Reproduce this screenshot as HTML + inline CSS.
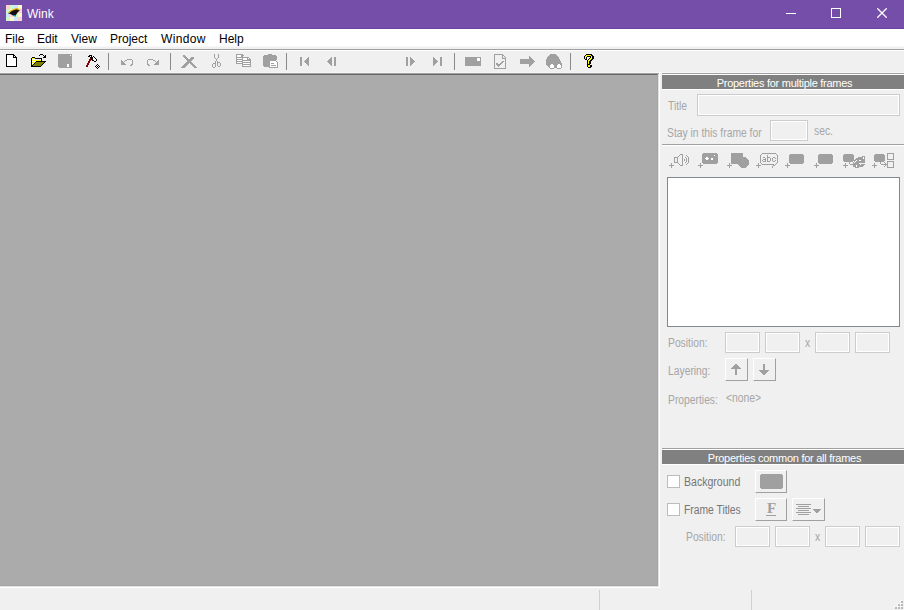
<!DOCTYPE html>
<html><head><meta charset="utf-8">
<style>
*{margin:0;padding:0;box-sizing:border-box}
html,body{width:904px;height:610px;overflow:hidden;background:#f0f0f0;font-family:"Liberation Sans",sans-serif;position:relative}
.a{position:absolute;white-space:nowrap}
.mi{font-size:12px;color:#000;line-height:14px}
.hdr{left:662px;width:242px;height:14px;background:#808080;color:#fff;font-size:11px;text-align:center;line-height:14px;letter-spacing:-0.27px;padding:1px 0 0 3px}
.lbl{font-size:12px;color:#a6a6a6;line-height:14px;transform:scaleX(0.86);transform-origin:0 0}
.box{border:1px solid #cccccc;background:#f0f0f0}
.box:after{content:"";position:absolute;left:0;top:0;right:0;bottom:0;border:1px solid #fff}
.btn{border-left:1px solid #fff;border-top:1px solid #fff;border-right:1px solid #a0a0a0;border-bottom:1px solid #a0a0a0;background:#f0f0f0}
.chk{width:13px;height:13px;background:#fff;border:1px solid #bcbcbc}
#ov{position:absolute;left:0;top:0}
</style></head><body>
<!-- title bar -->
<div class="a" style="left:0;top:0;width:904px;height:28px;background:#744ea8"></div>
<div class="a" style="left:0;top:28px;width:904px;height:1px;background:#6b44a3"></div>
<svg class="a" style="left:6px;top:5px" width="16" height="16" viewBox="0 0 16 16" shape-rendering="crispEdges"><rect x="0" y="0" width="4" height="4" fill="#ffd2d2"/><rect x="4" y="0" width="4" height="4" fill="#ccf6cc"/><rect x="8" y="0" width="4" height="4" fill="#cce6ff"/><rect x="12" y="0" width="4" height="4" fill="#fffbc8"/><rect x="0" y="4" width="4" height="4" fill="#ccf6cc"/><rect x="4" y="4" width="4" height="4" fill="#fffbc8"/><rect x="8" y="4" width="4" height="4" fill="#cce6ff"/><rect x="12" y="4" width="4" height="4" fill="#ffd2d2"/><rect x="0" y="8" width="4" height="4" fill="#cce6ff"/><rect x="4" y="8" width="4" height="4" fill="#ffd2d2"/><rect x="8" y="8" width="4" height="4" fill="#ccf6cc"/><rect x="12" y="8" width="4" height="4" fill="#fffbc8"/><rect x="0" y="12" width="4" height="4" fill="#ccf6cc"/><rect x="4" y="12" width="4" height="4" fill="#fffbc8"/><rect x="8" y="12" width="4" height="4" fill="#cce6ff"/><rect x="12" y="12" width="4" height="4" fill="#ffd2d2"/></svg>
<svg class="a" style="left:6px;top:5px" width="16" height="16" viewBox="0 0 16 16">
  <path d="M2.2 8.6 C3.5 6.5 6 5 8.5 4.3 L10.5 3.7 L13 4.6 L13.6 5.6 L11.8 7.2 L10.2 9.4 L9.3 11.4 L7 10.4 L5 9.2 Z" fill="#111"/>
  <path d="M2.8 7.8 C4 6 6.5 4.7 9 4.1 L11 3.7 L13 4.7" fill="none" stroke="#f0b400" stroke-width="1.3"/>
  <path d="M6.3 9.9 L9.3 11.5 L9.7 10.1 Z" fill="#2f8fd8"/>
</svg>
<div class="a" style="left:27px;top:7px;color:#fff;font-size:12px;line-height:14px">Wink</div>
<div class="a" style="left:786px;top:13px;width:10px;height:1px;background:#fff"></div>
<div class="a" style="left:831px;top:8px;width:10px;height:10px;border:1px solid #fff"></div>
<svg class="a" style="left:877px;top:8px" width="10" height="10"><path d="M0.3 0.3L9.7 9.7M9.7 0.3L0.3 9.7" stroke="#fff" stroke-width="1.3"/></svg>

<!-- menu bar -->
<div class="a" style="left:0;top:29px;width:904px;height:17px;background:#fff"></div>
<div class="a" style="left:0;top:46px;width:904px;height:1px;background:#f7f7f7"></div>
<div class="a" style="left:0;top:47px;width:904px;height:2px;background:#f0f0f0"></div>
<div class="a" style="left:0;top:49px;width:904px;height:1px;background:#a0a0a0"></div>
<div class="a" style="left:0;top:50px;width:904px;height:1px;background:#fff"></div>
<div class="a mi" style="left:5px;top:32px">File</div>
<div class="a mi" style="left:37px;top:32px">Edit</div>
<div class="a mi" style="left:71px;top:32px">View</div>
<div class="a mi" style="left:110px;top:32px">Project</div>
<div class="a mi" style="left:161px;top:32px;letter-spacing:0.35px">Window</div>
<div class="a mi" style="left:219px;top:32px">Help</div>

<!-- toolbar separators -->
<div class="a" style="left:108px;top:53px;width:1px;height:17px;background:#8a8a8a"></div>
<div class="a" style="left:170px;top:53px;width:1px;height:17px;background:#8a8a8a"></div>
<div class="a" style="left:286px;top:53px;width:1px;height:17px;background:#8a8a8a"></div>
<div class="a" style="left:454px;top:53px;width:1px;height:17px;background:#8a8a8a"></div>
<div class="a" style="left:570px;top:53px;width:1px;height:17px;background:#8a8a8a"></div>
<div class="a" style="left:0;top:72px;width:904px;height:1px;background:#f8f8f8"></div>

<!-- workspace -->
<div class="a" style="left:0;top:73px;width:659px;height:1px;background:#a0a0a0"></div>
<div class="a" style="left:0;top:74px;width:658px;height:512px;background:#ababab;border-top:1px solid #696969;border-right:1px solid #a4a4a4;border-bottom:1px solid #a4a4a4"></div>
<div class="a" style="left:658px;top:74px;width:1px;height:513px;background:#e3e3e3"></div>
<div class="a" style="left:0;top:586px;width:659px;height:1px;background:#e3e3e3"></div>
<div class="a" style="left:659px;top:73px;width:1px;height:515px;background:#fff"></div>
<div class="a" style="left:0;top:587px;width:660px;height:1px;background:#fff"></div>

<!-- right panel -->
<div class="a" style="left:662px;top:73px;width:242px;height:1px;background:#a0a0a0"></div>
<div class="a" style="left:662px;top:74px;width:242px;height:1px;background:#fff"></div>
<div class="a hdr" style="top:75px">Properties for multiple frames</div>
<div class="a" style="left:662px;top:89px;width:242px;height:1px;background:#fff"></div>

<div class="a lbl" style="left:668px;top:99px">Title</div>
<div class="a box" style="left:697px;top:94px;width:203px;height:22px"></div>
<div class="a lbl" style="left:667px;top:126px">Stay in this frame for</div>
<div class="a box" style="left:770px;top:120px;width:38px;height:21px"></div>
<div class="a lbl" style="left:814px;top:124px">sec.</div>
<div class="a" style="left:662px;top:144px;width:242px;height:1px;background:#a0a0a0"></div>
<div class="a" style="left:662px;top:145px;width:242px;height:1px;background:#fff"></div>

<div class="a" style="left:667px;top:177px;width:233px;height:150px;background:#fff;border:1px solid #828790"></div>

<div class="a lbl" style="left:668px;top:336px">Position:</div>
<div class="a box" style="left:725px;top:332px;width:35px;height:21px"></div>
<div class="a box" style="left:765px;top:332px;width:35px;height:21px"></div>
<div class="a lbl" style="left:805px;top:336px">x</div>
<div class="a box" style="left:815px;top:332px;width:35px;height:21px"></div>
<div class="a box" style="left:855px;top:332px;width:35px;height:21px"></div>
<div class="a lbl" style="left:668px;top:364px">Layering:</div>
<div class="a btn" style="left:725px;top:358px;width:23px;height:23px"></div>
<div class="a btn" style="left:753px;top:358px;width:23px;height:23px"></div>
<div class="a lbl" style="left:668px;top:393px">Properties:</div>
<div class="a lbl" style="left:726px;top:391px">&lt;none&gt;</div>

<div class="a" style="left:662px;top:448px;width:242px;height:1px;background:#a0a0a0"></div>
<div class="a" style="left:662px;top:449px;width:242px;height:1px;background:#fff"></div>
<div class="a hdr" style="top:450px">Properties common for all frames</div>
<div class="a" style="left:662px;top:464px;width:242px;height:1px;background:#fff"></div>

<div class="a chk" style="left:667px;top:475px"></div>
<div class="a lbl" style="left:684px;top:475px;color:#767676;transform:scaleX(0.88)">Background</div>
<div class="a btn" style="left:755px;top:470px;width:32px;height:23px"></div>
<div class="a chk" style="left:667px;top:503px"></div>
<div class="a lbl" style="left:684px;top:503px;color:#767676;transform:scaleX(0.86)">Frame Titles</div>
<div class="a btn" style="left:755px;top:498px;width:32px;height:23px"></div>
<div class="a" style="left:767px;top:501px;font-family:'Liberation Serif',serif;font-weight:bold;font-size:15px;color:#a0a0a0;line-height:15px">F</div>
<div class="a btn" style="left:792px;top:498px;width:33px;height:23px"></div>
<div class="a lbl" style="left:686px;top:530px">Position:</div>
<div class="a box" style="left:735px;top:526px;width:35px;height:21px"></div>
<div class="a box" style="left:775px;top:526px;width:35px;height:21px"></div>
<div class="a lbl" style="left:815px;top:530px">x</div>
<div class="a box" style="left:825px;top:526px;width:35px;height:21px"></div>
<div class="a box" style="left:865px;top:526px;width:35px;height:21px"></div>

<!-- status bar -->
<div class="a" style="left:599px;top:590px;width:1px;height:20px;background:#d0d0d0"></div>
<div class="a" style="left:751px;top:590px;width:1px;height:20px;background:#d0d0d0"></div>

<svg id="ov" width="904" height="610" shape-rendering="crispEdges"><rect x="6" y="54" width="8" height="1" fill="#000000"/><rect x="6" y="55" width="1" height="1" fill="#000000"/><rect x="7" y="55" width="6" height="1" fill="#ffffff"/><rect x="13" y="55" width="2" height="1" fill="#000000"/><rect x="6" y="56" width="1" height="1" fill="#000000"/><rect x="7" y="56" width="6" height="1" fill="#ffffff"/><rect x="13" y="56" width="1" height="1" fill="#000000"/><rect x="14" y="56" width="1" height="1" fill="#ffffff"/><rect x="15" y="56" width="1" height="1" fill="#000000"/><rect x="6" y="57" width="1" height="1" fill="#000000"/><rect x="7" y="57" width="6" height="1" fill="#ffffff"/><rect x="13" y="57" width="4" height="1" fill="#000000"/><rect x="6" y="58" width="1" height="1" fill="#000000"/><rect x="7" y="58" width="9" height="1" fill="#ffffff"/><rect x="16" y="58" width="1" height="1" fill="#000000"/><rect x="6" y="59" width="1" height="1" fill="#000000"/><rect x="7" y="59" width="9" height="1" fill="#ffffff"/><rect x="16" y="59" width="1" height="1" fill="#000000"/><rect x="6" y="60" width="1" height="1" fill="#000000"/><rect x="7" y="60" width="9" height="1" fill="#ffffff"/><rect x="16" y="60" width="1" height="1" fill="#000000"/><rect x="6" y="61" width="1" height="1" fill="#000000"/><rect x="7" y="61" width="9" height="1" fill="#ffffff"/><rect x="16" y="61" width="1" height="1" fill="#000000"/><rect x="6" y="62" width="1" height="1" fill="#000000"/><rect x="7" y="62" width="9" height="1" fill="#ffffff"/><rect x="16" y="62" width="1" height="1" fill="#000000"/><rect x="6" y="63" width="1" height="1" fill="#000000"/><rect x="7" y="63" width="9" height="1" fill="#ffffff"/><rect x="16" y="63" width="1" height="1" fill="#000000"/><rect x="6" y="64" width="1" height="1" fill="#000000"/><rect x="7" y="64" width="9" height="1" fill="#ffffff"/><rect x="16" y="64" width="1" height="1" fill="#000000"/><rect x="6" y="65" width="1" height="1" fill="#000000"/><rect x="7" y="65" width="9" height="1" fill="#ffffff"/><rect x="16" y="65" width="1" height="1" fill="#000000"/><rect x="6" y="66" width="11" height="1" fill="#000000"/><rect x="40" y="54" width="3" height="1" fill="#000000"/><rect x="39" y="55" width="1" height="1" fill="#000000"/><rect x="43" y="55" width="1" height="1" fill="#000000"/><rect x="45" y="55" width="1" height="1" fill="#000000"/><rect x="44" y="56" width="2" height="1" fill="#000000"/><rect x="32" y="57" width="3" height="1" fill="#000000"/><rect x="43" y="57" width="3" height="1" fill="#000000"/><rect x="31" y="58" width="1" height="1" fill="#000000"/><rect x="32" y="58" width="1" height="1" fill="#ffff00"/><rect x="33" y="58" width="1" height="1" fill="#ffffff"/><rect x="34" y="58" width="1" height="1" fill="#ffff00"/><rect x="35" y="58" width="7" height="1" fill="#000000"/><rect x="31" y="59" width="1" height="1" fill="#000000"/><rect x="32" y="59" width="1" height="1" fill="#ffffff"/><rect x="33" y="59" width="1" height="1" fill="#ffff00"/><rect x="34" y="59" width="1" height="1" fill="#ffffff"/><rect x="35" y="59" width="1" height="1" fill="#ffff00"/><rect x="36" y="59" width="1" height="1" fill="#ffffff"/><rect x="37" y="59" width="1" height="1" fill="#ffff00"/><rect x="38" y="59" width="1" height="1" fill="#ffffff"/><rect x="39" y="59" width="1" height="1" fill="#ffff00"/><rect x="40" y="59" width="1" height="1" fill="#ffffff"/><rect x="41" y="59" width="1" height="1" fill="#000000"/><rect x="31" y="60" width="1" height="1" fill="#000000"/><rect x="32" y="60" width="1" height="1" fill="#ffff00"/><rect x="33" y="60" width="1" height="1" fill="#ffffff"/><rect x="34" y="60" width="1" height="1" fill="#ffff00"/><rect x="35" y="60" width="1" height="1" fill="#ffffff"/><rect x="36" y="60" width="1" height="1" fill="#ffff00"/><rect x="37" y="60" width="1" height="1" fill="#ffffff"/><rect x="38" y="60" width="1" height="1" fill="#ffff00"/><rect x="39" y="60" width="1" height="1" fill="#ffffff"/><rect x="40" y="60" width="1" height="1" fill="#ffff00"/><rect x="41" y="60" width="1" height="1" fill="#000000"/><rect x="31" y="61" width="1" height="1" fill="#000000"/><rect x="32" y="61" width="1" height="1" fill="#ffffff"/><rect x="33" y="61" width="1" height="1" fill="#ffff00"/><rect x="34" y="61" width="1" height="1" fill="#ffffff"/><rect x="35" y="61" width="1" height="1" fill="#ffff00"/><rect x="36" y="61" width="10" height="1" fill="#000000"/><rect x="31" y="62" width="1" height="1" fill="#000000"/><rect x="32" y="62" width="1" height="1" fill="#ffff00"/><rect x="33" y="62" width="1" height="1" fill="#ffffff"/><rect x="34" y="62" width="1" height="1" fill="#ffff00"/><rect x="35" y="62" width="1" height="1" fill="#000000"/><rect x="36" y="62" width="8" height="1" fill="#808000"/><rect x="44" y="62" width="1" height="1" fill="#000000"/><rect x="31" y="63" width="1" height="1" fill="#000000"/><rect x="32" y="63" width="1" height="1" fill="#ffffff"/><rect x="33" y="63" width="1" height="1" fill="#ffff00"/><rect x="34" y="63" width="1" height="1" fill="#000000"/><rect x="35" y="63" width="8" height="1" fill="#808000"/><rect x="43" y="63" width="1" height="1" fill="#000000"/><rect x="31" y="64" width="1" height="1" fill="#000000"/><rect x="32" y="64" width="1" height="1" fill="#ffff00"/><rect x="33" y="64" width="1" height="1" fill="#000000"/><rect x="34" y="64" width="8" height="1" fill="#808000"/><rect x="42" y="64" width="1" height="1" fill="#000000"/><rect x="31" y="65" width="2" height="1" fill="#000000"/><rect x="33" y="65" width="8" height="1" fill="#808000"/><rect x="41" y="65" width="1" height="1" fill="#000000"/><rect x="31" y="66" width="10" height="1" fill="#000000"/><rect x="58" y="54" width="14" height="14" fill="#a0a0a0"/><rect x="70" y="55" width="1" height="1" fill="#ffffff"/><rect x="67" y="64" width="2" height="3" fill="#ffffff"/><rect x="58" y="67" width="1" height="1" fill="#f8f8f8"/><rect x="89" y="55" width="3" height="1" fill="#000000"/><rect x="88" y="56" width="2" height="1" fill="#000000"/><rect x="90" y="56" width="1" height="1" fill="#ffffff"/><rect x="91" y="56" width="1" height="1" fill="#000000"/><rect x="92" y="56" width="1" height="1" fill="#ffffff"/><rect x="93" y="56" width="1" height="1" fill="#000000"/><rect x="90" y="57" width="3" height="1" fill="#000000"/><rect x="93" y="57" width="1" height="1" fill="#ffffff"/><rect x="94" y="57" width="1" height="1" fill="#000000"/><rect x="90" y="58" width="1" height="1" fill="#800000"/><rect x="91" y="58" width="2" height="1" fill="#000000"/><rect x="93" y="58" width="2" height="1" fill="#ffffff"/><rect x="95" y="58" width="1" height="1" fill="#000000"/><rect x="89" y="59" width="2" height="1" fill="#800000"/><rect x="91" y="59" width="2" height="1" fill="#000000"/><rect x="93" y="59" width="3" height="1" fill="#ffffff"/><rect x="96" y="59" width="1" height="1" fill="#000000"/><rect x="89" y="60" width="2" height="1" fill="#800000"/><rect x="92" y="60" width="2" height="1" fill="#000000"/><rect x="94" y="60" width="2" height="1" fill="#ffffff"/><rect x="96" y="60" width="1" height="1" fill="#000000"/><rect x="88" y="61" width="2" height="1" fill="#800000"/><rect x="94" y="61" width="2" height="1" fill="#000000"/><rect x="88" y="62" width="2" height="1" fill="#800000"/><rect x="87" y="63" width="2" height="1" fill="#800000"/><rect x="87" y="64" width="2" height="1" fill="#800000"/><rect x="97" y="64" width="1" height="1" fill="#000000"/><rect x="86" y="65" width="2" height="1" fill="#800000"/><rect x="96" y="65" width="1" height="1" fill="#000000"/><rect x="97" y="65" width="1" height="1" fill="#ffffff"/><rect x="98" y="65" width="1" height="1" fill="#000000"/><rect x="86" y="66" width="2" height="1" fill="#800000"/><rect x="95" y="66" width="1" height="1" fill="#000000"/><rect x="96" y="66" width="1" height="1" fill="#ffffff"/><rect x="97" y="66" width="1" height="1" fill="#000000"/><rect x="98" y="66" width="1" height="1" fill="#ffffff"/><rect x="99" y="66" width="1" height="1" fill="#000000"/><rect x="96" y="67" width="1" height="1" fill="#000000"/><rect x="97" y="67" width="1" height="1" fill="#ffffff"/><rect x="98" y="67" width="1" height="1" fill="#000000"/><rect x="97" y="68" width="1" height="1" fill="#000000"/><rect x="121" y="60" width="1" height="1" fill="#a0a0a0"/><rect x="121" y="61" width="2" height="1" fill="#a0a0a0"/><rect x="121" y="62" width="3" height="1" fill="#a0a0a0"/><rect x="121" y="63" width="4" height="1" fill="#a0a0a0"/><rect x="121" y="64" width="5" height="1" fill="#a0a0a0"/><rect x="124" y="61" width="1" height="1" fill="#a0a0a0"/><rect x="125" y="60" width="2" height="1" fill="#a0a0a0"/><rect x="127" y="59" width="5" height="1" fill="#a0a0a0"/><rect x="132" y="60" width="1" height="5" fill="#a0a0a0"/><rect x="131" y="64" width="1" height="1" fill="#a0a0a0"/><rect x="130" y="65" width="2" height="1" fill="#a0a0a0"/><rect x="158" y="60" width="1" height="1" fill="#a0a0a0"/><rect x="157" y="61" width="2" height="1" fill="#a0a0a0"/><rect x="156" y="62" width="3" height="1" fill="#a0a0a0"/><rect x="155" y="63" width="4" height="1" fill="#a0a0a0"/><rect x="154" y="64" width="5" height="1" fill="#a0a0a0"/><rect x="155" y="61" width="1" height="1" fill="#a0a0a0"/><rect x="153" y="60" width="2" height="1" fill="#a0a0a0"/><rect x="148" y="59" width="5" height="1" fill="#a0a0a0"/><rect x="147" y="60" width="1" height="5" fill="#a0a0a0"/><rect x="148" y="64" width="1" height="1" fill="#a0a0a0"/><rect x="148" y="65" width="2" height="1" fill="#a0a0a0"/><rect x="183" y="55" width="2" height="1" fill="#a0a0a0"/><rect x="184" y="56" width="2" height="1" fill="#a0a0a0"/><rect x="185" y="57" width="2" height="1" fill="#a0a0a0"/><rect x="186" y="58" width="2" height="1" fill="#a0a0a0"/><rect x="187" y="59" width="2" height="1" fill="#a0a0a0"/><rect x="188" y="60" width="2" height="1" fill="#a0a0a0"/><rect x="189" y="61" width="2" height="1" fill="#a0a0a0"/><rect x="190" y="62" width="2" height="1" fill="#a0a0a0"/><rect x="191" y="63" width="2" height="1" fill="#a0a0a0"/><rect x="192" y="64" width="2" height="1" fill="#a0a0a0"/><rect x="193" y="65" width="2" height="1" fill="#a0a0a0"/><rect x="194" y="66" width="2" height="1" fill="#a0a0a0"/><rect x="195" y="67" width="2" height="1" fill="#a0a0a0"/><rect x="183" y="56" width="1" height="1" fill="#a0a0a0"/><rect x="184" y="57" width="1" height="1" fill="#a0a0a0"/><rect x="185" y="58" width="1" height="1" fill="#a0a0a0"/><rect x="186" y="59" width="1" height="1" fill="#a0a0a0"/><rect x="187" y="60" width="1" height="1" fill="#a0a0a0"/><rect x="188" y="61" width="1" height="1" fill="#a0a0a0"/><rect x="189" y="62" width="1" height="1" fill="#a0a0a0"/><rect x="190" y="63" width="1" height="1" fill="#a0a0a0"/><rect x="191" y="64" width="1" height="1" fill="#a0a0a0"/><rect x="192" y="65" width="1" height="1" fill="#a0a0a0"/><rect x="193" y="66" width="1" height="1" fill="#a0a0a0"/><rect x="194" y="67" width="1" height="1" fill="#a0a0a0"/><rect x="191" y="57" width="3" height="1" fill="#a0a0a0"/><rect x="190" y="58" width="3" height="1" fill="#a0a0a0"/><rect x="189" y="59" width="3" height="1" fill="#a0a0a0"/><rect x="188" y="60" width="3" height="1" fill="#a0a0a0"/><rect x="187" y="61" width="3" height="1" fill="#a0a0a0"/><rect x="186" y="62" width="3" height="1" fill="#a0a0a0"/><rect x="185" y="63" width="3" height="1" fill="#a0a0a0"/><rect x="184" y="64" width="3" height="1" fill="#a0a0a0"/><rect x="183" y="65" width="3" height="1" fill="#a0a0a0"/><rect x="182" y="66" width="3" height="1" fill="#a0a0a0"/><rect x="181" y="67" width="3" height="1" fill="#a0a0a0"/><rect x="191" y="58" width="3" height="1" fill="#a0a0a0"/><rect x="190" y="59" width="3" height="1" fill="#a0a0a0"/><rect x="189" y="60" width="3" height="1" fill="#a0a0a0"/><rect x="188" y="61" width="3" height="1" fill="#a0a0a0"/><rect x="187" y="62" width="3" height="1" fill="#a0a0a0"/><rect x="186" y="63" width="3" height="1" fill="#a0a0a0"/><rect x="185" y="64" width="3" height="1" fill="#a0a0a0"/><rect x="184" y="65" width="3" height="1" fill="#a0a0a0"/><rect x="183" y="66" width="3" height="1" fill="#a0a0a0"/><rect x="182" y="67" width="3" height="1" fill="#a0a0a0"/><rect x="214" y="54" width="1" height="4" fill="#a0a0a0"/><rect x="218" y="54" width="1" height="4" fill="#a0a0a0"/><rect x="215" y="58" width="1" height="1" fill="#a0a0a0"/><rect x="217" y="58" width="1" height="1" fill="#a0a0a0"/><rect x="216" y="59" width="1" height="1" fill="#a0a0a0"/><rect x="216" y="60" width="1" height="1" fill="#a0a0a0"/><rect x="215" y="61" width="1" height="1" fill="#a0a0a0"/><rect x="217" y="61" width="1" height="1" fill="#a0a0a0"/><rect x="215" y="62" width="1" height="5" fill="#a0a0a0"/><rect x="213" y="63" width="2" height="1" fill="#a0a0a0"/><rect x="212" y="64" width="1" height="3" fill="#a0a0a0"/><rect x="213" y="67" width="2" height="1" fill="#a0a0a0"/><rect x="217" y="62" width="1" height="4" fill="#a0a0a0"/><rect x="218" y="62" width="2" height="1" fill="#a0a0a0"/><rect x="220" y="63" width="1" height="3" fill="#a0a0a0"/><rect x="218" y="66" width="2" height="1" fill="#a0a0a0"/><rect x="236" y="54" width="7" height="10" fill="#a0a0a0"/><rect x="237" y="55" width="4" height="2" fill="#ffffff"/><rect x="237" y="58" width="5" height="1" fill="#ffffff"/><rect x="237" y="60" width="5" height="1" fill="#ffffff"/><rect x="237" y="62" width="5" height="1" fill="#ffffff"/><rect x="243" y="55" width="1" height="1" fill="#a0a0a0"/><rect x="242" y="57" width="9" height="10" fill="#a0a0a0"/><rect x="243" y="58" width="4" height="2" fill="#ffffff"/><rect x="243" y="61" width="7" height="1" fill="#ffffff"/><rect x="243" y="63" width="7" height="1" fill="#ffffff"/><rect x="243" y="65" width="7" height="1" fill="#ffffff"/><rect x="249" y="57" width="1" height="1" fill="#f0f0f0"/><rect x="250" y="57" width="1" height="1" fill="#f0f0f0"/><rect x="250" y="58" width="1" height="1" fill="#f0f0f0"/><rect x="248" y="58" width="1" height="1" fill="#ffffff"/><rect x="264" y="55" width="12" height="12" fill="#a0a0a0"/><rect x="263" y="56" width="14" height="10" fill="#a0a0a0"/><rect x="268" y="54" width="4" height="1" fill="#a0a0a0"/><rect x="269" y="60" width="9" height="8" fill="#a0a0a0"/><rect x="270" y="61" width="6" height="6" fill="#ffffff"/><rect x="276" y="63" width="1" height="4" fill="#ffffff"/><rect x="276" y="62" width="1" height="1" fill="#ffffff"/><rect x="277" y="60" width="1" height="1" fill="#f0f0f0"/><rect x="277" y="61" width="1" height="1" fill="#f0f0f0"/><rect x="276" y="60" width="1" height="1" fill="#f0f0f0"/><rect x="271" y="63" width="3" height="1" fill="#a0a0a0"/><rect x="271" y="65" width="5" height="1" fill="#a0a0a0"/><rect x="300" y="57" width="2" height="9" fill="#a0a0a0"/><rect x="304" y="61" width="1" height="1" fill="#a0a0a0"/><rect x="305" y="60" width="1" height="3" fill="#a0a0a0"/><rect x="306" y="59" width="1" height="5" fill="#a0a0a0"/><rect x="307" y="58" width="1" height="7" fill="#a0a0a0"/><rect x="308" y="57" width="1" height="9" fill="#a0a0a0"/><rect x="327" y="61" width="1" height="1" fill="#a0a0a0"/><rect x="328" y="60" width="1" height="3" fill="#a0a0a0"/><rect x="329" y="59" width="1" height="5" fill="#a0a0a0"/><rect x="330" y="58" width="1" height="7" fill="#a0a0a0"/><rect x="331" y="57" width="1" height="9" fill="#a0a0a0"/><rect x="334" y="57" width="2" height="9" fill="#a0a0a0"/><rect x="406" y="57" width="2" height="9" fill="#a0a0a0"/><rect x="414" y="61" width="1" height="1" fill="#a0a0a0"/><rect x="413" y="60" width="1" height="3" fill="#a0a0a0"/><rect x="412" y="59" width="1" height="5" fill="#a0a0a0"/><rect x="411" y="58" width="1" height="7" fill="#a0a0a0"/><rect x="410" y="57" width="1" height="9" fill="#a0a0a0"/><rect x="437" y="61" width="1" height="1" fill="#a0a0a0"/><rect x="436" y="60" width="1" height="3" fill="#a0a0a0"/><rect x="435" y="59" width="1" height="5" fill="#a0a0a0"/><rect x="434" y="58" width="1" height="7" fill="#a0a0a0"/><rect x="433" y="57" width="1" height="9" fill="#a0a0a0"/><rect x="440" y="57" width="2" height="9" fill="#a0a0a0"/><rect x="465" y="57" width="16" height="9" fill="#a0a0a0"/><rect x="477" y="58" width="3" height="3" fill="#ffffff"/><rect x="494" y="54" width="9" height="1" fill="#a0a0a0"/><rect x="494" y="54" width="1" height="15" fill="#a0a0a0"/><rect x="494" y="68" width="12" height="1" fill="#a0a0a0"/><rect x="505" y="58" width="1" height="11" fill="#a0a0a0"/><rect x="502" y="54" width="1" height="5" fill="#a0a0a0"/><rect x="502" y="58" width="4" height="1" fill="#a0a0a0"/><rect x="503" y="55" width="1" height="1" fill="#a0a0a0"/><rect x="504" y="56" width="1" height="1" fill="#a0a0a0"/><rect x="505" y="57" width="1" height="1" fill="#a0a0a0"/><rect x="502" y="61" width="2" height="1" fill="#a0a0a0"/><rect x="501" y="62" width="2" height="1" fill="#a0a0a0"/><rect x="496" y="63" width="2" height="1" fill="#a0a0a0"/><rect x="500" y="63" width="2" height="1" fill="#a0a0a0"/><rect x="496" y="64" width="5" height="1" fill="#a0a0a0"/><rect x="497" y="65" width="3" height="1" fill="#a0a0a0"/><rect x="498" y="66" width="1" height="1" fill="#a0a0a0"/><rect x="520" y="59" width="9" height="5" fill="#a0a0a0"/><rect x="529" y="56" width="1" height="11" fill="#a0a0a0"/><rect x="530" y="57" width="1" height="9" fill="#a0a0a0"/><rect x="531" y="58" width="1" height="7" fill="#a0a0a0"/><rect x="532" y="59" width="1" height="5" fill="#a0a0a0"/><rect x="533" y="60" width="1" height="3" fill="#a0a0a0"/><rect x="534" y="61" width="1" height="1" fill="#a0a0a0"/><rect x="550" y="54" width="6" height="1" fill="#a0a0a0"/><rect x="549" y="55" width="8" height="1" fill="#a0a0a0"/><rect x="548" y="56" width="10" height="1" fill="#a0a0a0"/><rect x="547" y="57" width="12" height="1" fill="#a0a0a0"/><rect x="547" y="58" width="12" height="1" fill="#a0a0a0"/><rect x="546" y="59" width="14" height="1" fill="#a0a0a0"/><rect x="546" y="60" width="14" height="1" fill="#a0a0a0"/><rect x="546" y="61" width="15" height="1" fill="#a0a0a0"/><rect x="546" y="62" width="15" height="1" fill="#a0a0a0"/><rect x="546" y="63" width="16" height="1" fill="#a0a0a0"/><rect x="546" y="64" width="16" height="1" fill="#a0a0a0"/><rect x="547" y="65" width="15" height="1" fill="#a0a0a0"/><rect x="548" y="66" width="14" height="1" fill="#a0a0a0"/><rect x="549" y="67" width="13" height="1" fill="#a0a0a0"/><rect x="550" y="64" width="4" height="4" fill="#ffffff"/><rect x="557" y="64" width="4" height="4" fill="#ffffff"/><rect x="550" y="68" width="4" height="1" fill="#a0a0a0"/><rect x="557" y="68" width="4" height="1" fill="#a0a0a0"/><rect x="550" y="64" width="1" height="1" fill="#a0a0a0"/><rect x="553" y="64" width="1" height="1" fill="#a0a0a0"/><rect x="557" y="64" width="1" height="1" fill="#a0a0a0"/><rect x="560" y="64" width="1" height="1" fill="#a0a0a0"/><rect x="586" y="54" width="6" height="1" fill="#000000"/><rect x="585" y="55" width="1" height="1" fill="#000000"/><rect x="586" y="55" width="5" height="1" fill="#ffff00"/><rect x="591" y="55" width="2" height="1" fill="#000000"/><rect x="584" y="56" width="1" height="1" fill="#000000"/><rect x="585" y="56" width="2" height="1" fill="#ffff00"/><rect x="587" y="56" width="4" height="1" fill="#000000"/><rect x="591" y="56" width="1" height="1" fill="#ffff00"/><rect x="592" y="56" width="2" height="1" fill="#000000"/><rect x="584" y="57" width="1" height="1" fill="#000000"/><rect x="585" y="57" width="1" height="1" fill="#ffff00"/><rect x="586" y="57" width="1" height="1" fill="#000000"/><rect x="588" y="57" width="1" height="1" fill="#ffffff"/><rect x="590" y="57" width="1" height="1" fill="#000000"/><rect x="591" y="57" width="1" height="1" fill="#ffff00"/><rect x="592" y="57" width="2" height="1" fill="#000000"/><rect x="584" y="58" width="1" height="1" fill="#000000"/><rect x="585" y="58" width="1" height="1" fill="#ffff00"/><rect x="586" y="58" width="1" height="1" fill="#000000"/><rect x="587" y="58" width="2" height="1" fill="#ffffff"/><rect x="589" y="58" width="1" height="1" fill="#000000"/><rect x="590" y="58" width="2" height="1" fill="#ffff00"/><rect x="592" y="58" width="2" height="1" fill="#000000"/><rect x="585" y="59" width="2" height="1" fill="#000000"/><rect x="587" y="59" width="1" height="1" fill="#ffffff"/><rect x="588" y="59" width="1" height="1" fill="#000000"/><rect x="589" y="59" width="2" height="1" fill="#ffff00"/><rect x="591" y="59" width="2" height="1" fill="#000000"/><rect x="587" y="60" width="1" height="1" fill="#000000"/><rect x="588" y="60" width="2" height="1" fill="#ffff00"/><rect x="590" y="60" width="2" height="1" fill="#000000"/><rect x="587" y="61" width="1" height="1" fill="#000000"/><rect x="588" y="61" width="1" height="1" fill="#ffff00"/><rect x="589" y="61" width="2" height="1" fill="#000000"/><rect x="587" y="62" width="1" height="1" fill="#000000"/><rect x="588" y="62" width="1" height="1" fill="#ffff00"/><rect x="589" y="62" width="2" height="1" fill="#000000"/><rect x="587" y="63" width="1" height="1" fill="#000000"/><rect x="588" y="63" width="1" height="1" fill="#ffff00"/><rect x="589" y="63" width="2" height="1" fill="#000000"/><rect x="587" y="64" width="3" height="1" fill="#000000"/><rect x="587" y="65" width="1" height="1" fill="#000000"/><rect x="588" y="65" width="2" height="1" fill="#ffff00"/><rect x="590" y="65" width="2" height="1" fill="#000000"/><rect x="587" y="66" width="1" height="1" fill="#000000"/><rect x="588" y="66" width="2" height="1" fill="#ffff00"/><rect x="590" y="66" width="2" height="1" fill="#000000"/><rect x="588" y="67" width="3" height="1" fill="#000000"/><rect x="669" y="165" width="5" height="1" fill="#a0a0a0"/><rect x="671" y="163" width="1" height="5" fill="#a0a0a0"/><rect x="674" y="157" width="4" height="1" fill="#a0a0a0"/><rect x="674" y="162" width="4" height="1" fill="#a0a0a0"/><rect x="674" y="157" width="1" height="6" fill="#a0a0a0"/><rect x="677" y="157" width="1" height="6" fill="#a0a0a0"/><rect x="678" y="156" width="1" height="1" fill="#a0a0a0"/><rect x="679" y="155" width="1" height="1" fill="#a0a0a0"/><rect x="680" y="154" width="3" height="1" fill="#a0a0a0"/><rect x="682" y="154" width="1" height="12" fill="#a0a0a0"/><rect x="680" y="165" width="3" height="1" fill="#a0a0a0"/><rect x="678" y="163" width="1" height="1" fill="#a0a0a0"/><rect x="679" y="164" width="1" height="1" fill="#a0a0a0"/><rect x="684" y="159" width="1" height="2" fill="#a0a0a0"/><rect x="685" y="157" width="1" height="1" fill="#a0a0a0"/><rect x="686" y="158" width="1" height="4" fill="#a0a0a0"/><rect x="685" y="162" width="1" height="1" fill="#a0a0a0"/><rect x="686" y="155" width="1" height="1" fill="#a0a0a0"/><rect x="687" y="156" width="1" height="1" fill="#a0a0a0"/><rect x="688" y="157" width="1" height="6" fill="#a0a0a0"/><rect x="687" y="163" width="1" height="1" fill="#a0a0a0"/><rect x="686" y="164" width="1" height="1" fill="#a0a0a0"/><rect x="698" y="165" width="5" height="1" fill="#a0a0a0"/><rect x="700" y="163" width="1" height="5" fill="#a0a0a0"/><rect x="703" y="153" width="14" height="11" fill="#a0a0a0"/><rect x="702" y="154" width="16" height="9" fill="#a0a0a0"/><rect x="706" y="157" width="2" height="1" fill="#ffffff"/><rect x="705" y="158" width="4" height="1" fill="#ffffff"/><rect x="706" y="159" width="2" height="1" fill="#ffffff"/><rect x="711" y="158" width="2" height="2" fill="#ffffff"/><rect x="714" y="155" width="1" height="1" fill="#ffffff"/><rect x="727" y="165" width="5" height="1" fill="#a0a0a0"/><rect x="729" y="163" width="1" height="5" fill="#a0a0a0"/><rect x="731" y="153" width="12" height="11" fill="#a0a0a0"/><rect x="742" y="157" width="4" height="1" fill="#a0a0a0"/><rect x="742" y="158" width="5" height="1" fill="#a0a0a0"/><rect x="742" y="159" width="6" height="1" fill="#a0a0a0"/><rect x="742" y="160" width="7" height="1" fill="#a0a0a0"/><rect x="742" y="161" width="7" height="1" fill="#a0a0a0"/><rect x="742" y="162" width="7" height="1" fill="#a0a0a0"/><rect x="742" y="163" width="7" height="1" fill="#a0a0a0"/><rect x="738" y="164" width="11" height="1" fill="#a0a0a0"/><rect x="739" y="165" width="9" height="1" fill="#a0a0a0"/><rect x="740" y="166" width="7" height="1" fill="#a0a0a0"/><rect x="741" y="167" width="5" height="1" fill="#a0a0a0"/><rect x="756" y="165" width="5" height="1" fill="#a0a0a0"/><rect x="758" y="163" width="1" height="5" fill="#a0a0a0"/><rect x="762" y="153" width="14" height="1" fill="#a0a0a0"/><rect x="761" y="154" width="1" height="1" fill="#a0a0a0"/><rect x="776" y="154" width="1" height="1" fill="#a0a0a0"/><rect x="760" y="155" width="1" height="8" fill="#a0a0a0"/><rect x="777" y="155" width="1" height="8" fill="#a0a0a0"/><rect x="761" y="163" width="1" height="1" fill="#a0a0a0"/><rect x="776" y="163" width="1" height="1" fill="#a0a0a0"/><rect x="762" y="164" width="12" height="1" fill="#a0a0a0"/><rect x="773" y="165" width="1" height="1" fill="#a0a0a0"/><rect x="772" y="166" width="1" height="2" fill="#a0a0a0"/><rect x="774" y="165" width="1" height="1" fill="#a0a0a0"/><rect x="775" y="164" width="1" height="1" fill="#a0a0a0"/><rect x="767" y="155" width="1" height="1" fill="#a0a0a0"/><rect x="767" y="156" width="1" height="1" fill="#a0a0a0"/><rect x="763" y="157" width="2" height="1" fill="#a0a0a0"/><rect x="767" y="157" width="3" height="1" fill="#a0a0a0"/><rect x="773" y="157" width="2" height="1" fill="#a0a0a0"/><rect x="765" y="158" width="1" height="1" fill="#a0a0a0"/><rect x="767" y="158" width="1" height="1" fill="#a0a0a0"/><rect x="770" y="158" width="1" height="1" fill="#a0a0a0"/><rect x="772" y="158" width="1" height="1" fill="#a0a0a0"/><rect x="775" y="158" width="1" height="1" fill="#a0a0a0"/><rect x="763" y="159" width="3" height="1" fill="#a0a0a0"/><rect x="767" y="159" width="1" height="1" fill="#a0a0a0"/><rect x="770" y="159" width="1" height="1" fill="#a0a0a0"/><rect x="772" y="159" width="1" height="1" fill="#a0a0a0"/><rect x="762" y="160" width="1" height="1" fill="#a0a0a0"/><rect x="765" y="160" width="1" height="1" fill="#a0a0a0"/><rect x="767" y="160" width="1" height="1" fill="#a0a0a0"/><rect x="770" y="160" width="1" height="1" fill="#a0a0a0"/><rect x="772" y="160" width="1" height="1" fill="#a0a0a0"/><rect x="775" y="160" width="1" height="1" fill="#a0a0a0"/><rect x="763" y="161" width="3" height="1" fill="#a0a0a0"/><rect x="767" y="161" width="3" height="1" fill="#a0a0a0"/><rect x="773" y="161" width="2" height="1" fill="#a0a0a0"/><rect x="785" y="165" width="5" height="1" fill="#a0a0a0"/><rect x="787" y="163" width="1" height="5" fill="#a0a0a0"/><rect x="790" y="154" width="13" height="1" fill="#a0a0a0"/><rect x="789" y="155" width="15" height="8" fill="#a0a0a0"/><rect x="790" y="163" width="13" height="1" fill="#a0a0a0"/><rect x="814" y="165" width="5" height="1" fill="#a0a0a0"/><rect x="816" y="163" width="1" height="5" fill="#a0a0a0"/><rect x="819" y="154" width="13" height="1" fill="#a0a0a0"/><rect x="818" y="155" width="15" height="8" fill="#a0a0a0"/><rect x="819" y="163" width="13" height="1" fill="#a0a0a0"/><rect x="843" y="165" width="5" height="1" fill="#a0a0a0"/><rect x="845" y="163" width="1" height="5" fill="#a0a0a0"/><rect x="844" y="154" width="9" height="1" fill="#a0a0a0"/><rect x="843" y="155" width="11" height="6" fill="#a0a0a0"/><rect x="844" y="161" width="9" height="1" fill="#a0a0a0"/><rect x="849" y="162" width="1" height="2" fill="#a0a0a0"/><rect x="850" y="164" width="4" height="1" fill="#a0a0a0"/><rect x="862" y="156" width="3" height="1" fill="#a0a0a0"/><rect x="858" y="157" width="5" height="1" fill="#a0a0a0"/><rect x="863" y="157" width="1" height="1" fill="#ffffff"/><rect x="864" y="157" width="1" height="1" fill="#a0a0a0"/><rect x="856" y="158" width="7" height="1" fill="#a0a0a0"/><rect x="863" y="158" width="1" height="1" fill="#ffffff"/><rect x="864" y="158" width="1" height="1" fill="#a0a0a0"/><rect x="855" y="159" width="10" height="1" fill="#a0a0a0"/><rect x="854" y="160" width="2" height="1" fill="#a0a0a0"/><rect x="856" y="160" width="1" height="1" fill="#ffffff"/><rect x="857" y="160" width="2" height="1" fill="#a0a0a0"/><rect x="859" y="160" width="2" height="1" fill="#ffffff"/><rect x="861" y="160" width="4" height="1" fill="#a0a0a0"/><rect x="853" y="161" width="1" height="1" fill="#ffffff"/><rect x="854" y="161" width="1" height="1" fill="#a0a0a0"/><rect x="855" y="161" width="1" height="1" fill="#ffffff"/><rect x="856" y="161" width="9" height="1" fill="#a0a0a0"/><rect x="853" y="162" width="1" height="1" fill="#a0a0a0"/><rect x="854" y="162" width="1" height="1" fill="#ffffff"/><rect x="855" y="162" width="10" height="1" fill="#a0a0a0"/><rect x="853" y="163" width="6" height="1" fill="#a0a0a0"/><rect x="859" y="163" width="1" height="1" fill="#ffffff"/><rect x="853" y="164" width="7" height="1" fill="#a0a0a0"/><rect x="861" y="164" width="4" height="1" fill="#a0a0a0"/><rect x="853" y="165" width="3" height="1" fill="#a0a0a0"/><rect x="856" y="165" width="1" height="1" fill="#ffffff"/><rect x="857" y="165" width="7" height="1" fill="#a0a0a0"/><rect x="853" y="166" width="3" height="1" fill="#a0a0a0"/><rect x="856" y="166" width="1" height="1" fill="#ffffff"/><rect x="857" y="166" width="6" height="1" fill="#a0a0a0"/><rect x="855" y="167" width="4" height="1" fill="#a0a0a0"/><rect x="872" y="165" width="5" height="1" fill="#a0a0a0"/><rect x="874" y="163" width="1" height="5" fill="#a0a0a0"/><rect x="875" y="154" width="9" height="1" fill="#a0a0a0"/><rect x="874" y="155" width="11" height="6" fill="#a0a0a0"/><rect x="875" y="161" width="9" height="1" fill="#a0a0a0"/><rect x="880" y="162" width="1" height="2" fill="#a0a0a0"/><rect x="881" y="164" width="6" height="1" fill="#a0a0a0"/><rect x="884" y="162" width="1" height="1" fill="#a0a0a0"/><rect x="885" y="163" width="1" height="1" fill="#a0a0a0"/><rect x="885" y="165" width="1" height="1" fill="#a0a0a0"/><rect x="884" y="166" width="1" height="1" fill="#a0a0a0"/><rect x="887" y="153" width="7" height="7" fill="#a0a0a0"/><rect x="888" y="154" width="5" height="5" fill="#f0f0f0"/><rect x="887" y="161" width="7" height="7" fill="#a0a0a0"/><rect x="888" y="162" width="5" height="5" fill="#f0f0f0"/><rect x="735" y="364" width="2" height="1" fill="#a0a0a0"/><rect x="734" y="365" width="4" height="1" fill="#a0a0a0"/><rect x="733" y="366" width="6" height="1" fill="#a0a0a0"/><rect x="732" y="367" width="8" height="1" fill="#a0a0a0"/><rect x="731" y="368" width="10" height="1" fill="#a0a0a0"/><rect x="735" y="369" width="2" height="6" fill="#a0a0a0"/><rect x="763" y="364" width="2" height="6" fill="#a0a0a0"/><rect x="759" y="370" width="10" height="1" fill="#a0a0a0"/><rect x="760" y="371" width="8" height="1" fill="#a0a0a0"/><rect x="761" y="372" width="6" height="1" fill="#a0a0a0"/><rect x="762" y="373" width="4" height="1" fill="#a0a0a0"/><rect x="763" y="374" width="2" height="1" fill="#a0a0a0"/><rect x="761" y="474" width="21" height="15" fill="#a0a0a0"/><rect x="760" y="475" width="23" height="13" fill="#a0a0a0"/><rect x="766" y="515" width="10" height="1" fill="#a0a0a0"/><rect x="796" y="504" width="15" height="1" fill="#a0a0a0"/><rect x="798" y="506" width="11" height="1" fill="#a0a0a0"/><rect x="796" y="508" width="15" height="1" fill="#a0a0a0"/><rect x="798" y="510" width="11" height="1" fill="#a0a0a0"/><rect x="796" y="512" width="15" height="1" fill="#a0a0a0"/><rect x="798" y="514" width="11" height="1" fill="#a0a0a0"/><rect x="813" y="509" width="8" height="1" fill="#a0a0a0"/><rect x="814" y="510" width="6" height="1" fill="#a0a0a0"/><rect x="815" y="511" width="4" height="1" fill="#a0a0a0"/><rect x="816" y="512" width="2" height="1" fill="#a0a0a0"/><rect x="817" y="513" width="0" height="1" fill="#a0a0a0"/><rect x="900" y="600" width="2" height="2" fill="#f9f9f9"/><rect x="901" y="601" width="2" height="2" fill="#b9b9b9"/><rect x="897" y="603" width="2" height="2" fill="#f9f9f9"/><rect x="898" y="604" width="2" height="2" fill="#b9b9b9"/><rect x="900" y="603" width="2" height="2" fill="#f9f9f9"/><rect x="901" y="604" width="2" height="2" fill="#b9b9b9"/><rect x="894" y="606" width="2" height="2" fill="#f9f9f9"/><rect x="895" y="607" width="2" height="2" fill="#b9b9b9"/><rect x="897" y="606" width="2" height="2" fill="#f9f9f9"/><rect x="898" y="607" width="2" height="2" fill="#b9b9b9"/><rect x="900" y="606" width="2" height="2" fill="#f9f9f9"/><rect x="901" y="607" width="2" height="2" fill="#b9b9b9"/></svg>
</body></html>
